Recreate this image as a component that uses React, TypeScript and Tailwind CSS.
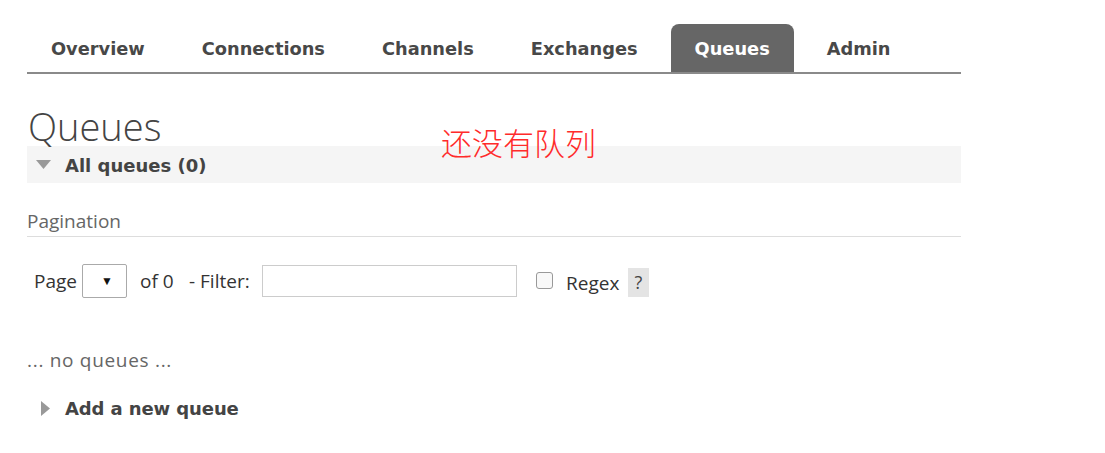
import React from "react";

const body = { fontFamily: '"Open Sans", "Noto Sans", sans-serif' };
const bold = { fontFamily: '"DejaVu Sans", Verdana, sans-serif' };

export default function App() {
  const tabs = ["Overview", "Connections", "Channels", "Exchanges", "Queues", "Admin"];
  return (
    <div className="w-[1105px] h-[453px] bg-white" style={body}>
      <div className="ml-[27px] w-[934px] pt-[24px]">
        <div className="flex items-end gap-[9px] border-b-2 border-[#8a8a8a]">
          {tabs.map((t) => (
            <div
              key={t}
              className={
                "h-[48px] flex items-center px-[24px] pt-[2px] text-[17.8px] font-bold rounded-t-[8px] " +
                (t === "Queues" ? "bg-[#666666] text-white" : "text-[#484848]")
              }
              style={bold}
            >
              {t}
            </div>
          ))}
        </div>
        <div className="relative">
          <h1 className="text-[38px] font-light text-[#444] leading-[40px] mt-[32px] pl-[1px]">Queues</h1>
          <div
            className="absolute left-[414px] top-[18px] text-[31px] text-[#ff2b2b] leading-[36px]"
            style={{ fontFamily: '"Noto Sans CJK SC", sans-serif', fontWeight: 300 }}
          >
            还没有队列
          </div>
        </div>
        <div className="h-[37px] bg-[#f5f5f5] flex items-center pl-[9px]">
          <svg width="15" height="9" viewBox="0 0 15 9"><path d="M0 0 L15 0 L7.5 9 Z" fill="#999" /></svg>
          <span className="ml-[14px] text-[18px] font-bold text-[#444] mt-[2px]" style={bold}>All queues (0)</span>
        </div>
        <div className="mt-[25px] text-[19px] leading-[26px] text-[#666] pb-[2px] border-b border-[#ddd]">Pagination</div>
        <div className="flex items-center mt-[27px] pl-[7px] text-[19px] text-[#333] h-[34px]">
          <span className="w-[48px]">Page</span>
          <div className="w-[45px] h-[34px] border border-[#aaa] rounded-[2px] flex items-center justify-end pr-[13px] text-[12px] text-[#111]">▼</div>
          <span className="ml-[13px] w-[49px]">of 0</span>
          <span className="w-[73px]">- Filter:</span>
          <div className="w-[255px] h-[32px] border border-[#ccc]"></div>
          <div className="ml-[19px] w-[17px] h-[17px] border border-[#999] rounded-[3px] bg-[#f8f8f8] mt-[-2px]"></div>
          <span className="ml-[13px] mt-[4px] w-[62px]">Regex</span>
          <div className="w-[21px] h-[29px] bg-[#e4e4e4] flex items-center justify-center text-[#444] text-[18px] mt-[3px]">?</div>
        </div>
        <div className="mt-[48px] text-[19px] text-[#666] tracking-[0.7px]">... no queues ...</div>
        <div className="mt-[20px] flex items-center pl-[14px]">
          <svg width="9" height="15" viewBox="0 0 9 15"><path d="M0 0 L9 7.5 L0 15 Z" fill="#999" /></svg>
          <span className="ml-[15px] text-[18px] font-bold text-[#444] tracking-[-0.1px]" style={bold}>Add a new queue</span>
        </div>
      </div>
    </div>
  );
}
